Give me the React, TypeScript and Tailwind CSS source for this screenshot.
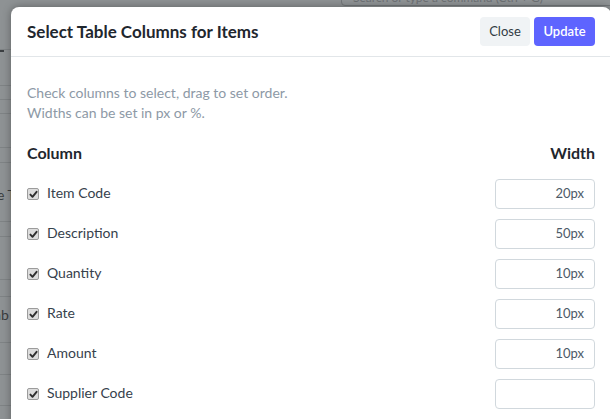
import React from 'react'

const columns = [
  { label: 'Item Code', width: '20px' },
  { label: 'Description', width: '50px' },
  { label: 'Quantity', width: '10px' },
  { label: 'Rate', width: '10px' },
  { label: 'Amount', width: '10px' },
  { label: 'Supplier Code', width: '' },
  { label: 'UOM', width: '' },
]

// background rows behind the dimmed overlay (heights between rule lines)
const bgRows = [50, 36, 14, 14, 34, 15, 59, 15, 43, 17, 46, 32, 31, 30]

const Check = () => (
  <span className="flex h-[12px] w-[12px] items-center justify-center rounded-[2px] border border-[#9c9c9c] bg-[#dddddd]">
    <svg width="9" height="9" viewBox="0 0 9 9">
      <path d="M1.4 4.6 L3.5 6.8 L7.6 1.8" fill="none" stroke="#2e2e2e" strokeWidth="1.9" strokeLinecap="round" strokeLinejoin="round" />
    </svg>
  </span>
)

export default function App() {
  return (
    <div className="relative h-[419px] w-[610px] overflow-hidden bg-[#8e9294] font-['Lato','Liberation_Sans',sans-serif]">
      {/* dimmed page behind */}
      <div className="flex flex-col">
        {bgRows.map((h, i) => (
          <div key={i} className="relative w-full border-b border-[#7f8385]" style={{ height: h }}>
            {i === 0 && (
              <div className="absolute left-[341px] top-[-12px] h-[18px] w-[300px] rounded border border-[#73777a] bg-[#909496] pl-[11px] text-[12px] leading-[18px] text-[#6d7174]">
                Search or type a command (Ctrl + G)
              </div>
            )}
          </div>
        ))}
      </div>
      <span className="absolute left-0 top-[50px] h-[2px] w-[4px] bg-[#3c3f42]" />
      <span className="absolute left-[-3px] top-[184px] text-[14px] text-[#3a3d40]">e T</span>
      <span className="absolute left-[-6px] top-[304px] text-[14px] text-[#3a3d40]">ab</span>

      {/* modal */}
      <div className="absolute left-[11px] top-[7px] w-[600px] rounded-t-[8px] bg-white shadow-[0_0_8px_rgba(0,0,0,0.35)]">
        <div className="flex h-[50px] items-center justify-between border-b border-[#e2e6e9] pl-[16px] pr-[16px]">
          <h3 className="text-[17px] font-bold text-[#1f272e]">Select Table Columns for Items</h3>
          <div className="flex items-center gap-[4px]">
            <button className="h-[29px] w-[50px] rounded-[4px] bg-[#f0f3f5] text-[13px] text-[#333c44]">Close</button>
            <button className="h-[29px] w-[61px] rounded-[4px] bg-[#5e64ff] text-[13px] font-semibold text-white">Update</button>
          </div>
        </div>
        <div className="px-[16px] pt-[26px]">
          <p className="text-[14px] leading-[20px] text-[#8d99a6]">
            Check columns to select, drag to set order.
            <br />
            Widths can be set in px or %.
          </p>
          <div className="mt-[20px] flex h-[20px] items-center justify-between text-[16px] font-bold text-[#1f272e]">
            <span>Column</span>
            <span>Width</span>
          </div>
          <div className="mt-[16px] flex flex-col gap-[10px]">
            {columns.map((c) => (
              <div key={c.label} className="flex h-[30px] items-center justify-between">
                <label className="flex items-center gap-[8px] pb-[3px] text-[14px] leading-[18px] text-[#36414c]">
                  <span className="pt-[3px]">
                    <Check />
                  </span>
                  {c.label}
                </label>
                <div className="flex h-[30px] w-[100px] items-center justify-end rounded-[4px] border border-[#d1d8dd] bg-white pb-[1px] pr-[10px] text-[13px] text-[#4c5a67]">
                  {c.width}
                </div>
              </div>
            ))}
          </div>
        </div>
      </div>
    </div>
  )
}
